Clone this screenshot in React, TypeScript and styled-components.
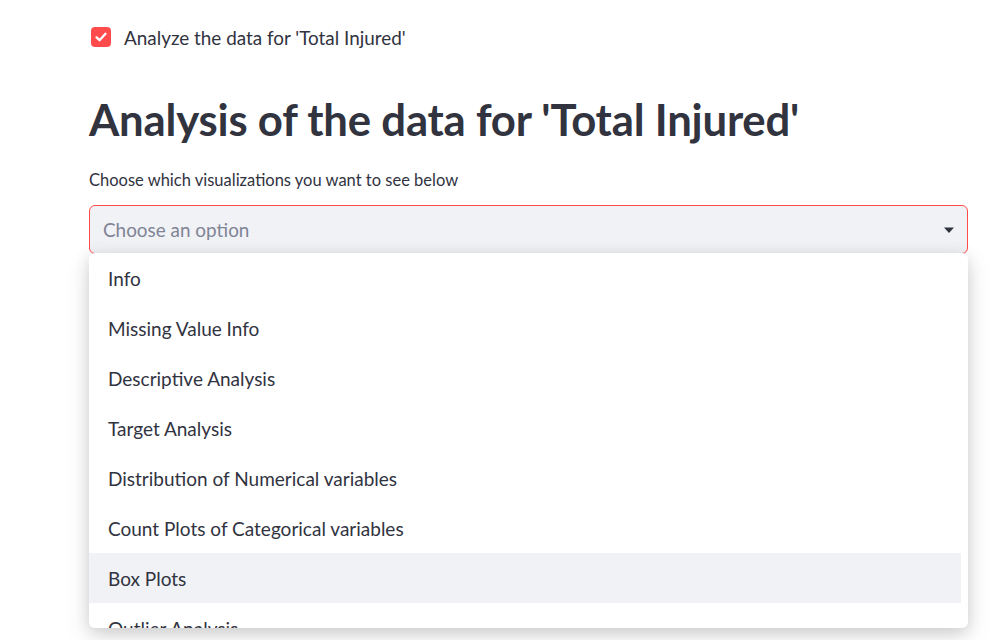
import React from "react";
import styled, { createGlobalStyle } from "styled-components";

const Global = createGlobalStyle`
  html, body { margin: 0; padding: 0; background: #ffffff; }
  body { font-family: "Source Sans Pro", Lato, "Noto Sans", sans-serif; color: #31333f; }
  * { box-sizing: border-box; }
`;

const Page = styled.div`
  width: 1007px;
  height: 640px;
  overflow: hidden;
  padding: 0 39px 0 89px;
`;

const CheckRow = styled.label`
  display: flex;
  align-items: center;
  gap: 13px;
  height: 20px;
  margin-top: 27px;
  margin-left: 2px;
  font-size: 18.9px;
  color: #31333f;
`;

const Box = styled.span`
  width: 20px;
  height: 20px;
  border-radius: 4px;
  background: #ff4b4b;
  display: flex;
  align-items: center;
  justify-content: center;
`;

const Title = styled.h1`
  margin: 46px 0 0 0;
  font-size: 43.7px;
  line-height: 52px;
  font-weight: 700;
  color: #31333f;
  letter-spacing: -0.2px;
`;

const Caption = styled.div`
  margin-top: 25px;
  font-size: 16.5px;
  line-height: 20px;
  color: #31333f;
`;

const SelectWrap = styled.div`
  position: relative;
  margin-top: 15px;
`;

const SelectBox = styled.div`
  height: 49px;
  border: 1px solid #ff4b4b;
  border-radius: 6px;
  background: #f0f2f6;
  display: flex;
  align-items: center;
  justify-content: space-between;
  padding: 0 12px 0 13px;
`;

const Placeholder = styled.span`
  font-size: 18.9px;
  color: #808495;
`;

const Menu = styled.ul`
  position: absolute;
  left: 0;
  right: 0;
  top: 48px;
  height: 375px;
  margin: 0;
  padding: 0 7px 0 0;
  list-style: none;
  background: #ffffff;
  border-radius: 6px;
  overflow: hidden;
  box-shadow: 0 4px 16px rgba(0, 0, 0, 0.16), 0 10px 30px rgba(0, 0, 0, 0.08);
`;

const Option = styled.li<{ $active?: boolean }>`
  height: 50px;
  display: flex;
  align-items: center;
  padding-left: 19px;
  font-size: 19px;
  color: #31333f;
  background: ${(p) => (p.$active ? "#f0f2f6" : "transparent")};
`;

const options = [
  "Info",
  "Missing Value Info",
  "Descriptive Analysis",
  "Target Analysis",
  "Distribution of Numerical variables",
  "Count Plots of Categorical variables",
  "Box Plots",
  "Outlier Analysis",
];

export default function App() {
  return (
    <>
      <Global />
      <Page>
        <CheckRow>
          <Box>
            <svg width="14" height="14" viewBox="0 0 14 14">
              <path d="M2.5 7.3 L5.6 10.2 L11.5 3.8" stroke="#fff" strokeWidth="2.3" fill="none" strokeLinecap="round" strokeLinejoin="round" />
            </svg>
          </Box>
          Analyze the data for 'Total Injured'
        </CheckRow>
        <Title>Analysis of the data for 'Total Injured'</Title>
        <Caption>Choose which visualizations you want to see below</Caption>
        <SelectWrap>
          <SelectBox>
            <Placeholder>Choose an option</Placeholder>
            <svg width="12" height="8" viewBox="0 0 12 8">
              <path d="M1 1.5 L11 1.5 L6 7 Z" fill="#31333f" />
            </svg>
          </SelectBox>
          <Menu>
            {options.map((o) => (
              <Option key={o} $active={o === "Box Plots"}>
                {o}
              </Option>
            ))}
          </Menu>
        </SelectWrap>
      </Page>
    </>
  );
}
